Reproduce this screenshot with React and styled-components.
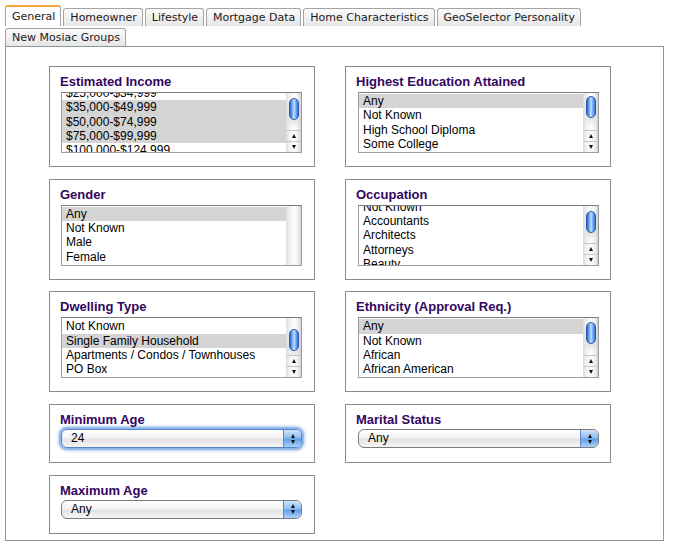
import React from "react";
import styled, { createGlobalStyle, css } from "styled-components";

const Global = createGlobalStyle`
  html, body { margin: 0; padding: 0; background: #fff; }
  body { font-family: "Liberation Sans", Arial, sans-serif; color: #000; }
`;

const Page = styled.div`
  padding: 5px 0 0 5px;
  width: 659px;
`;

const TabBar = styled.div`
  display: flex;
  flex-wrap: wrap;
  align-items: flex-end;
  column-gap: 2px;
  row-gap: 2px;
  width: 659px;
`;

const Tab = styled.div`
  box-sizing: border-box;
  height: 18px;
  padding: 0 5px 0 6px;
  border: 1px solid #a4a4a4;
  border-bottom: none;
  border-radius: 3px 3px 0 0;
  background: linear-gradient(#fbfbfb, #e6e6e6);
  font-family: "DejaVu Sans", Verdana, sans-serif;
  font-size: 11px;
  line-height: 17px;
  color: #1a1a1a;
  white-space: nowrap;
  ${(p) =>
    p.$active &&
    css`
      height: 21px;
      background: #fff;
      border-top: 2px solid #f3a43a;
      line-height: 19px;
    `}
`;

const Panel = styled.div`
  box-sizing: border-box;
  width: 659px;
  border: 1px solid #8d9999;
  padding: 19px 0 6px 43px;
`;

const Grid = styled.div`
  display: grid;
  grid-template-columns: 266px 266px;
  column-gap: 30px;
  row-gap: 11.7px;
  align-items: start;
`;

const Card = styled.div`
  box-sizing: border-box;
  border: 1px solid #8a8a8a;
  padding: 6px 12px ${(p) => (p.$select ? "14px" : "13px")} 10px;
`;

const Title = styled.div`
  font-family: "Liberation Sans", Arial, sans-serif;
  font-weight: bold;
  font-size: 13px;
  line-height: 17px;
  color: #33065f;
`;

const ListBox = styled.div`
  box-sizing: border-box;
  margin: 2px 0 0 ${(p) => p.$indent || 1}px;
  width: 241px;
  height: 61px;
  border: 1px solid #9c9c9c;
  border-top-color: #7d7d7d;
  display: flex;
  background: #fff;
`;

const Items = styled.div`
  flex: 1;
  overflow: hidden;
  padding-top: 1px;
`;

const ItemsInner = styled.div`
  margin-top: ${(p) => p.$offset || 0}px;
`;

const Item = styled.div`
  height: 14.3px;
  line-height: 14px;
  font-size: 12px;
  padding-left: 4px;
  white-space: nowrap;
  background: ${(p) => (p.$selected ? "#d4d4d4" : "transparent")};
`;

const ScrollBar = styled.div`
  width: 15px;
  display: flex;
  flex-direction: column;
  background: linear-gradient(to right, #dcdcdc 0%, #f3f3f3 25%, #fdfdfd 55%, #f0f0f0 80%, #d2d2d2 100%);
`;

const Track = styled.div`
  flex: 1;
  display: flex;
  flex-direction: column;
  align-items: center;
  padding-top: ${(p) => p.$top}px;
`;

const Thumb = styled.div`
  box-sizing: border-box;
  width: 10px;
  height: 22px;
  border: 1px solid #2a58b0;
  border-radius: 5px;
  background: linear-gradient(to right, #2f67cc 0%, #6fa9f0 28%, #c2e2ff 50%, #77b1f4 72%, #3470d2 100%);
  box-shadow: 0 6px 5px -2px rgba(0, 0, 0, 0.15);
`;

const ArrowBtn = styled.div`
  height: 10px;
  display: flex;
  align-items: center;
  justify-content: center;
  border-top: 1px solid #c6c6c6;
`;

const Tri = styled.span`
  width: 0;
  height: 0;
  border-left: 2.5px solid transparent;
  border-right: 2.5px solid transparent;
  ${(p) =>
    p.$down
      ? css`border-top: 4px solid ${p.$color || "#111"};`
      : css`border-bottom: 4px solid ${p.$color || "#111"};`}
`;

const SelectBox = styled.div`
  box-sizing: border-box;
  margin: 1px 0 0 ${(p) => p.$indent || 1}px;
  width: 241px;
  height: 19px;
  display: flex;
  border: 1px solid #7b7b7b;
  border-radius: 6px;
  background: linear-gradient(#ffffff 0%, #f3f3f3 45%, #e3e3e3 55%, #f6f6f6 100%);
  ${(p) =>
    p.$focused &&
    css`
      border-color: #5a83c4;
      box-shadow: 0 0 1px 2px #8fb6ec, 0 0 3px 3px rgba(110, 160, 230, 0.45);
    `}
`;

const SelectText = styled.div`
  flex: 1;
  font-size: 12px;
  line-height: 17px;
  padding-left: 9px;
`;

const SelectArrow = styled.div`
  width: 17px;
  border-left: 1px solid #5f86c6;
  border-radius: 0 5px 5px 0;
  background: linear-gradient(#cfe4fb 0%, #8dbbf0 48%, #5f9de8 52%, #a9d2fb 100%);
  display: flex;
  flex-direction: column;
  align-items: center;
  justify-content: center;
  gap: 2px;
`;

function Scroll({ thumb, disabled }) {
  if (disabled) return <ScrollBar />;
  return (
    <ScrollBar>
      <Track $top={thumb}>
        <Thumb />
      </Track>
      <ArrowBtn>
        <Tri />
      </ArrowBtn>
      <ArrowBtn>
        <Tri $down />
      </ArrowBtn>
    </ScrollBar>
  );
}

function ListCard({ title, items, selected = [], offset = 0, thumb, disabled, indent }) {
  return (
    <Card>
      <Title>{title}</Title>
      <ListBox $indent={indent}>
        <Items>
          <ItemsInner $offset={offset}>
            {items.map((it) => (
              <Item key={it} $selected={selected.includes(it)}>
                {it}
              </Item>
            ))}
          </ItemsInner>
        </Items>
        <Scroll thumb={thumb} disabled={disabled} />
      </ListBox>
    </Card>
  );
}

function SelectCard({ title, value, focused, indent }) {
  return (
    <Card $select>
      <Title>{title}</Title>
      <SelectBox $focused={focused} $indent={indent}>
        <SelectText>{value}</SelectText>
        <SelectArrow>
          <Tri />
          <Tri $down />
        </SelectArrow>
      </SelectBox>
    </Card>
  );
}

const tabsData = [
  "General",
  "Homeowner",
  "Lifestyle",
  "Mortgage Data",
  "Home Characteristics",
  "GeoSelector Personality",
  "New Mosiac Groups",
];

export default function App() {
  return (
    <>
      <Global />
      <Page>
        <TabBar>
          {tabsData.map((t, i) => (
            <Tab key={t} $active={i === 0}>
              {t}
            </Tab>
          ))}
        </TabBar>
        <Panel>
          <Grid>
            <ListCard
              title="Estimated Income"
              items={["$25,000-$34,999", "$35,000-$49,999", "$50,000-$74,999", "$75,000-$99,999", "$100,000-$124,999"]}
              selected={["$35,000-$49,999", "$50,000-$74,999", "$75,000-$99,999"]}
              offset={-8}
              thumb={5}
            />
            <ListCard
              title="Highest Education Attained"
              items={["Any", "Not Known", "High School Diploma", "Some College", "Vocational / Technical"]}
              selected={["Any"]}
              thumb={3}
              indent={2}
            />
            <ListCard
              title="Gender"
              items={["Any", "Not Known", "Male", "Female"]}
              selected={["Any"]}
              disabled
            />
            <ListCard
              title="Occupation"
              items={["Not Known", "Accountants", "Architects", "Attorneys", "Beauty"]}
              offset={-7}
              thumb={5}
              indent={2}
            />
            <ListCard
              title="Dwelling Type"
              items={["Not Known", "Single Family Household", "Apartments / Condos / Townhouses", "PO Box"]}
              selected={["Single Family Household"]}
              thumb={11}
            />
            <ListCard
              title="Ethnicity (Approval Req.)"
              items={["Any", "Not Known", "African", "African American", "Asian"]}
              selected={["Any"]}
              thumb={4}
              indent={2}
            />
            <SelectCard title="Minimum Age" value="24" focused />
            <SelectCard title="Marital Status" value="Any" indent={2} />
            <SelectCard title="Maximum Age" value="Any" />
          </Grid>
        </Panel>
      </Page>
    </>
  );
}
